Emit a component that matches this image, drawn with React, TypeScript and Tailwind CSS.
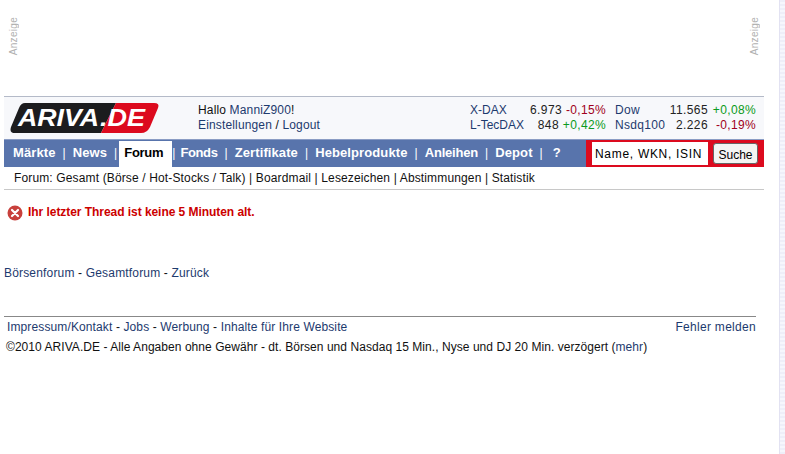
export default function App() {
  const nav = [
    { t: "Märkte", c: "" },
    { t: "News", c: "" },
    { t: "Forum", c: "" },
    { t: "Fonds", c: "tracking-[-0.4px] -ml-[2px]" },
    { t: "Zertifikate", c: "" },
    { t: "Hebelprodukte", c: "" },
    { t: "Anleihen", c: "tracking-[-0.2px]" },
    { t: "Depot", c: "" },
    { t: "?", c: "ml-[3px]" },
  ];
  const link = "text-[#1d3a6e]";
  const Row = ({ n, v, c, col, pad }: { n: string; v: string; c: string; col: string; pad?: boolean }) => (
    <>
      <span className={`${link} ${pad ? "pl-[9px] tracking-[0.3px]" : ""}`}>{n}</span>
      <span className="text-right text-[#222] tracking-[0.4px]">{v}</span>
      <span className={`text-right tracking-[0.35px] ${col}`}>{c}</span>
    </>
  );
  const Ad = () => (
    <span className="text-[10px] leading-[10px] text-[#b0b0b0] [writing-mode:vertical-rl] rotate-180 tracking-[0.3px]">Anzeige</span>
  );
  return (
    <div className="w-[785px] h-[454px] overflow-hidden flex bg-white text-[12px] text-[#111] font-['Liberation_Sans',Arial,sans-serif]">
      <div className="w-[760px] ml-[4px] shrink-0 flex flex-col">
        <div className="h-[96px] flex justify-between items-start pl-[5px] pr-[4px] pt-[17px]">
          <Ad />
          <Ad />
        </div>
        <div className="h-[43px] border-t border-[#b4bac8] bg-[#f7f8fb] flex">
          <svg width="150" height="30" viewBox="0 0 150 30" className="ml-[6px] mt-[6px] shrink-0">
            <path d="M15 0 H106 L91 30 H5 Q-1 30 1 24 L9 5 Q11 0 15 0Z" fill="#1c1c1e" />
            <path d="M106 0 H144 Q150 0 148 5 L140 24 Q137 30 131 30 H91Z" fill="#dc0a1e" />
            <text x="8" y="23" fontFamily="Liberation Sans" fontWeight="700" fontStyle="italic" fontSize="23" fill="#fff" textLength="81" lengthAdjust="spacingAndGlyphs">ARIVA</text>
            <text x="90" y="23" fontFamily="Liberation Sans" fontWeight="700" fontStyle="italic" fontSize="23" fill="#fff" textLength="45" lengthAdjust="spacingAndGlyphs">.DE</text>
          </svg>
          <div className="ml-[38px] mt-[6px] leading-[15px] tracking-[0.15px]">
            <div>Hallo <span className={link}>ManniZ900</span>!</div>
            <div className={link}>Einstellungen <span className="text-[#111]">/</span> Logout</div>
          </div>
          <div className="ml-auto mr-[8px] mt-[6px] self-start grid grid-cols-[60px_29px_47px_59px_43px_48px] leading-[15px] whitespace-nowrap">
            <Row n="X-DAX" v="6.973" c="-0,15%" col="text-[#a00020]" />
            <Row pad n="Dow" v="11.565" c="+0,08%" col="text-[#0a9a20]" />
            <Row n="L-TecDAX" v="848" c="+0,42%" col="text-[#0a9a20]" />
            <Row pad n="Nsdq100" v="2.226" c="-0,19%" col="text-[#a00020]" />
          </div>
        </div>
        <div className="h-[28px] flex bg-[#5874ac] border-t border-[#8a9cc4]">
          <div className="flex items-stretch pl-[8px] text-[13px] font-bold text-white flex-1 tracking-[0.1px]">
            {nav.map((n, i) => (
              <div key={n.t} className="flex items-center pb-[2px]">
                {i > 0 && <span className={`font-normal text-[12px] mx-[6px] ${n.t === "Fonds" ? "relative" : ""}`}>|</span>}
                <span className={n.t === "Forum" ? "self-stretch flex items-center bg-white text-black tracking-[-0.3px] pl-[5px] pr-[6px] -ml-[4px] -mr-[6px] mt-[1px] -mb-[2px] pb-[2px] border-r-[3px] border-white" : `px-[1px] ${n.c}`}>{n.t}</span>
              </div>
            ))}
          </div>
          <div className="w-[178px] bg-[#dc0a1e] flex items-center pl-[6px] gap-[5px]">
            <div className="w-[116px] h-[23px] bg-white text-[12px] text-black pl-[3px] flex items-center tracking-[0.7px]">Name, WKN, ISIN</div>
            <div className="w-[45px] h-[21px] bg-[#f4f4f2] border border-[#666] rounded-[3px] text-[12px] text-black flex items-center justify-center pt-[2px]">Suche</div>
          </div>
        </div>
        <div className="h-[23px] border-b border-[#c8c8c8] pl-[10px] flex items-center bg-white tracking-[0.14px]">
          Forum: Gesamt (Börse / Hot-Stocks / Talk) | Boardmail | Lesezeichen | Abstimmungen | Statistik
        </div>
        <div className="flex items-center mt-[15px] pl-[3px] gap-[5px] h-[16px] font-bold text-[12px] tracking-[-0.05px] text-[#cc0000]">
          <svg width="16" height="16" viewBox="0 0 16 16">
            <circle cx="8" cy="8" r="7.5" fill="#c8403c" />
            <path d="M5 5 L11 11 M11 5 L5 11" stroke="#fff" strokeWidth="2.2" strokeLinecap="round" />
          </svg>
          <span className="pb-[2px]">Ihr letzter Thread ist keine 5 Minuten alt.</span>
        </div>
        <div className="mt-[45px] leading-[15px] tracking-[0.17px]">
          <span className={link}>Börsenforum</span> - <span className={link}>Gesamtforum</span> - <span className={link}>Zurück</span>
        </div>
        <div className="mt-[35px] border-t border-[#888] pl-[3px] pt-[3px] flex justify-between w-[752px] leading-[15px] tracking-[0.12px]">
          <div>
            <span className={link}>Impressum/Kontakt</span> - <span className={link}>Jobs</span> - <span className={link}>Werbung</span> - <span className={link}>Inhalte für Ihre Website</span>
          </div>
          <span className={`${link} tracking-[0.3px]`}>Fehler melden</span>
        </div>
        <div className="mt-[5px] px-[2px] leading-[15px] tracking-[0.05px]">
          ©2010 ARIVA.DE - Alle Angaben ohne Gewähr - dt. Börsen und Nasdaq 15 Min., Nyse und DJ 20 Min. verzögert (<span className={link}>mehr</span>)
        </div>
      </div>
      <div className="ml-[15px] w-[6px] border-l border-[#e2e2f2] bg-[repeating-linear-gradient(180deg,#eeeef8_0px,#eeeef8_2px,#f6f6fc_2px,#f6f6fc_4px)]" />
    </div>
  );
}
